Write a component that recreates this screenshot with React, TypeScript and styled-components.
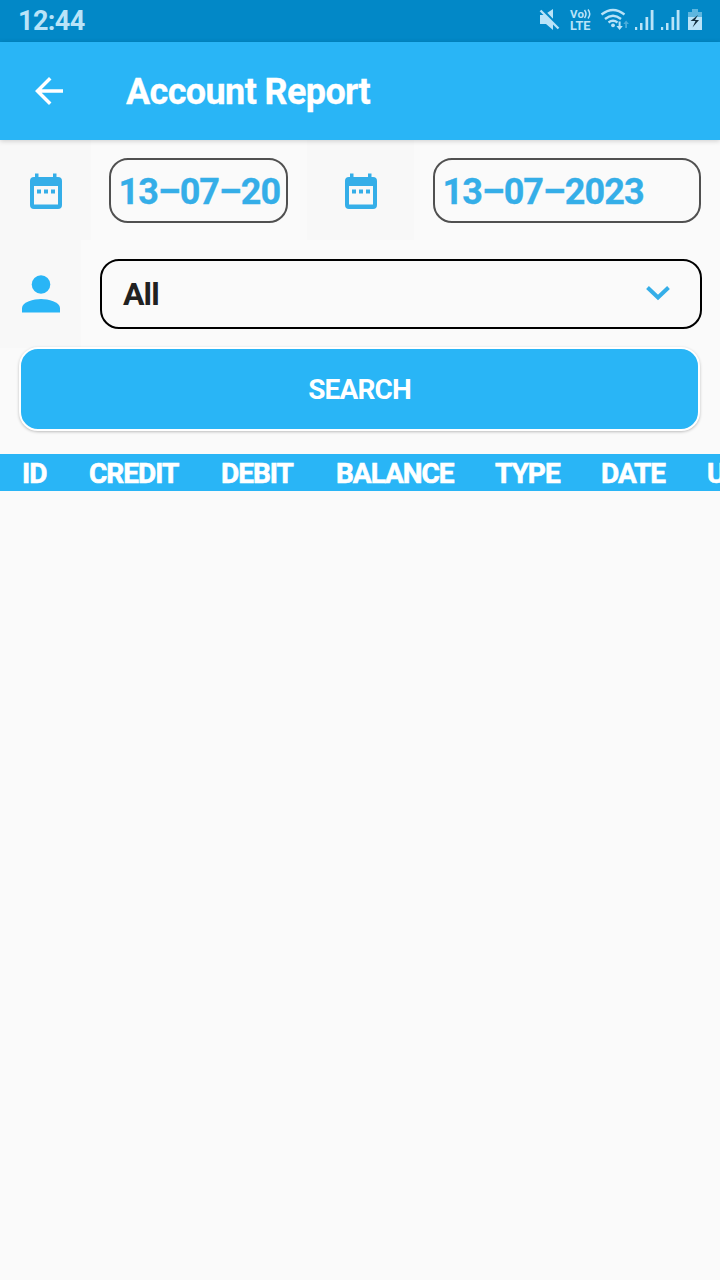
import React from "react";
import styled, { createGlobalStyle } from "styled-components";

const GlobalStyle = createGlobalStyle`
  * { box-sizing: border-box; }
  html, body { margin: 0; padding: 0; background: #fafafa; }
  body { font-family: Roboto, "Liberation Sans", sans-serif; overflow: hidden; }
`;

const Screen = styled.div`
  width: 720px;
  height: 1280px;
  background: #fafafa;
  display: flex;
  flex-direction: column;
  overflow: hidden;
`;

const StatusBar = styled.div`
  height: 42px;
  flex: none;
  background: #0288c7;
  color: #b9e3f8;
  display: flex;
  justify-content: space-between;
  padding-left: 18px;
`;

const Clock = styled.span`
  font-size: 27px;
  font-weight: 700;
  line-height: 42px;
  letter-spacing: -0.6px;
`;

const StatusIcons = styled.svg`
  display: block;
  width: 190px;
  height: 42px;
`;

const AppBar = styled.header`
  height: 98px;
  flex: none;
  background: #29b5f6;
  color: #fff;
  display: flex;
  align-items: center;
  padding-left: 28px;
  box-shadow: 0 1px 5px rgba(0, 0, 0, 0.18);
  z-index: 1;
`;

const Title = styled.h1`
  margin: 2px 0 0 56px;
  font-size: 36px;
  font-weight: 700;
  line-height: 42px;
  letter-spacing: -0.62px;
  -webkit-text-stroke: 0.3px #fff;
  white-space: nowrap;
`;

const FieldRow = styled.div<{ $height: number }>`
  height: ${(p) => p.$height}px;
  flex: none;
  display: flex;
`;

const IconCell = styled.div<{ $width: number; $gap?: number }>`
  width: ${(p) => p.$width}px;
  margin-left: ${(p) => p.$gap ?? 0}px;
  flex: none;
  background: #f8f8f8;
  display: flex;
  align-items: center;
  justify-content: center;
`;

const DateField = styled.div<{ $width: number; $gap: number }>`
  width: ${(p) => p.$width}px;
  height: 65px;
  margin: 18px 0 0 ${(p) => p.$gap}px;
  padding-left: 7.500px;
  flex: none;
  border: 2px solid #505050;
  border-radius: 19px;
  color: #35aee8;
  font-size: 36px;
  font-weight: 700;
  line-height: 64px;
  letter-spacing: -0.95px;
  -webkit-text-stroke: 0.3px #35aee8;
  white-space: nowrap;
  overflow: hidden;
`;

const Select = styled.div`
  width: 602px;
  height: 70px;
  margin: 19px 0 0 19px;
  padding: 0 30px 0 21px;
  border: 2px solid #000;
  border-radius: 19px;
  display: flex;
  align-items: center;
  justify-content: space-between;
  color: #212121;
  font-size: 32px;
  font-weight: 700;
  letter-spacing: -0.9px;

  svg {
    margin-bottom: 2px;
  }
`;

const SearchButton = styled.button`
  width: 681px;
  height: 84px;
  flex: none;
  margin: -1px 0 0 19px;
  padding: 0;
  border: 2px solid #fff;
  border-radius: 19px;
  background: #29b5f6;
  box-shadow: 0 1px 3px rgba(0, 0, 0, 0.25);
  color: #fff;
  font-family: inherit;
  font-size: 28px;
  font-weight: 700;
  letter-spacing: -0.85px;
`;

const TableHead = styled.div`
  height: 37px;
  flex: none;
  margin-top: 23px;
  padding-left: 22px;
  background: #29b5f6;
  color: #fff;
  display: flex;
  overflow: hidden;
`;

const HeadCell = styled.div<{ $width: number }>`
  width: ${(p) => p.$width}px;
  flex: none;
  font-size: 28px;
  font-weight: 700;
  line-height: 39px;
  letter-spacing: -1.02px;
  -webkit-text-stroke: 0.6px #fff;
  white-space: nowrap;
`;

const columns = [
  { label: "ID", width: 67 },
  { label: "CREDIT", width: 132 },
  { label: "DEBIT", width: 115 },
  { label: "BALANCE", width: 159 },
  { label: "TYPE", width: 106 },
  { label: "DATE", width: 106 },
  { label: "USER", width: 100 },
];

const CalendarIcon = () => (
  <svg width="34" height="38" viewBox="0 0 34 38" fill="#35aee8">
    <path d="M6 2.500h3.500v3.500h14.500V2.500h3.500v3.500h1.500a4 4 0 0 1 4 4v24a4 4 0 0 1-4 4H5a4 4 0 0 1-4-4V10a4 4 0 0 1 4-4h1zM5 15v18.500h24V15z" fillRule="evenodd" />
    <path d="M8 18.500h4v4H8zm7 0h4v4h-4zm7 0h4v4h-4z" />
  </svg>
);

const Status = () => (
  <StatusIcons viewBox="530 0 190 42" fill="#b9e3f8" fontFamily="Roboto, sans-serif">
    <path d="M540 15h4l9-6v21l-7-6h-6z" />
    <path d="M541.500 9l18 18.500" stroke="#0288c7" strokeWidth="3" />
    <path d="M540.500 10.500l18 18" stroke="#b9e3f8" strokeWidth="2.300" />
    <text x="570" y="18" fontSize="11.500" fontWeight="700" textLength="14">Vo</text>
    <g fill="none" stroke="#b9e3f8" strokeWidth="1.500">
      <path d="M584.500 10q3 4 0 8M588 9.500q3.500 4.500 0 9" />
    </g>
    <text x="570" y="30" fontSize="12.500" fontWeight="700" textLength="20.500" lengthAdjust="spacingAndGlyphs">LTE</text>
    <g fill="none" stroke="#b9e3f8" strokeWidth="2.300">
      <path d="M601.500 14.500q11.500-9 23 0M605 19q8-6.500 16 0M608.500 22.500q4.500-3.500 9 0" />
    </g>
    <circle cx="613" cy="25.300" r="1.900" />
    <path d="M618.600 21.500h2v4.500h2.200l-3.200 4-3.200-4h2.200z" />
    <path d="M625.200 28h1.800v-4h1.900l-2.800-3.500-2.800 3.500h1.900z" opacity=".4" />
    <path d="M635 27h2.200v3H635zm5-4h2.500v7H640zm5.500-6h2.700v13h-2.700zm5.200-7h2.800v20h-2.800z" />
    <path d="M661 27h2.200v3H661zm5-4h2.500v7H666zm5.500-6h2.700v13h-2.700zm5.200-7h2.800v20h-2.800z" />
    <path d="M692 9h6v3h4v5h-14v-5h4z" opacity=".5" />
    <path d="M688 17h14v13h-14z" />
    <path d="M698 15l-7.500 6h5l-3 6.500 6.500-7.500h-4z" fill="#15303f" />
  </StatusIcons>
);

export default function App() {
  return (
    <>
      <GlobalStyle />
      <Screen>
        <StatusBar>
          <Clock>12:44</Clock>
          <Status />
        </StatusBar>
        <AppBar>
          <svg width="42" height="42" viewBox="0 0 24 24" fill="#fff">
            <path d="M20 11H7.830l5.590-5.590L12 4l-8 8 8 8 1.410-1.410L7.830 13H20v-2z" />
          </svg>
          <Title>Account Report</Title>
        </AppBar>
        <FieldRow $height={100}>
          <IconCell $width={91}><CalendarIcon /></IconCell>
          <DateField $width={179} $gap={18}>13–07–20</DateField>
          <IconCell $width={107} $gap={19}><CalendarIcon /></IconCell>
          <DateField $width={268} $gap={19}>13–07–2023</DateField>
        </FieldRow>
        <FieldRow $height={108}>
          <IconCell $width={81}>
            <svg width="38" height="38" viewBox="0 0 38 38" fill="#29b5f6">
              <circle cx="19" cy="9.500" r="9.300" />
              <path d="M0 37.500v-4.500c0-6 12-9 19-9s19 3 19 9v4.500z" />
            </svg>
          </IconCell>
          <Select>
            All
            <svg width="24" height="15" viewBox="0 0 24 15" fill="none" stroke="#35aee8" strokeWidth="4">
              <path d="M1.500 1.500L12 11.500 22.500 1.500" />
            </svg>
          </Select>
        </FieldRow>
        <SearchButton>SEARCH</SearchButton>
        <TableHead>
          {columns.map((c) => (
            <HeadCell key={c.label} $width={c.width}>{c.label}</HeadCell>
          ))}
        </TableHead>
      </Screen>
    </>
  );
}
